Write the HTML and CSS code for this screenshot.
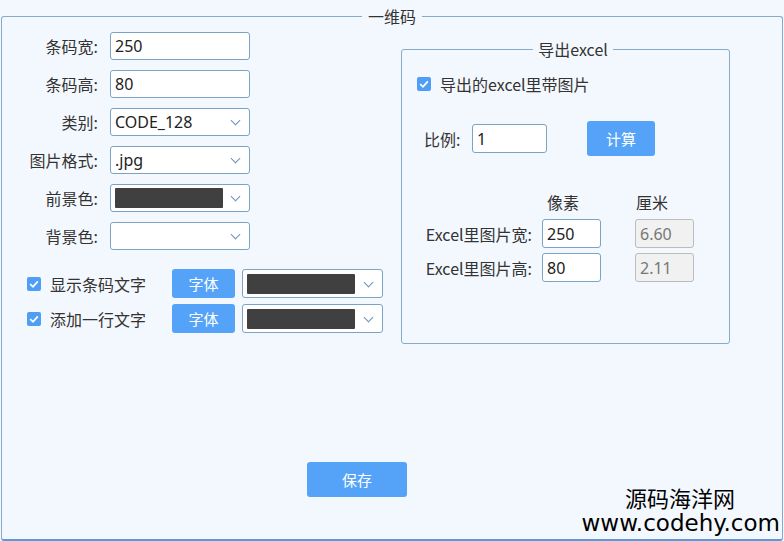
FILE: index.html
```html
<!DOCTYPE html>
<html lang="zh-CN">
<head>
    <meta charset="UTF-8">
    <title>一维码</title>
    <link rel="stylesheet" href="styles.css">
</head>
<body>
    <fieldset class="panel">
        <legend>一维码</legend>
        <div class="panel-body">
            <div class="left">
                <div class="form">
                    <label class="lbl">条码宽:</label>
                    <input class="field" value="250">
                    <label class="lbl">条码高:</label>
                    <input class="field" value="80">
                    <label class="lbl">类别:</label>
                    <div class="select"><span class="sel-text">CODE_128</span><i class="arrow"></i></div>
                    <label class="lbl">图片格式:</label>
                    <div class="select"><span class="sel-text">.jpg</span><i class="arrow"></i></div>
                    <label class="lbl">前景色:</label>
                    <div class="select"><span class="swatch"></span><i class="arrow"></i></div>
                    <label class="lbl">背景色:</label>
                    <div class="select"><span class="sel-text"></span><i class="arrow"></i></div>
                </div>
                <div class="opts">
                    <div class="opt-row">
                        <span class="check"><svg viewBox="0 0 14 14"><path d="M3.2 7.2 L6 9.8 L10.8 4.4" /></svg></span>
                        <span class="opt-text">显示条码文字</span>
                        <button class="btn font-btn">字体</button>
                        <div class="select wide"><span class="swatch"></span><i class="arrow"></i></div>
                    </div>
                    <div class="opt-row">
                        <span class="check"><svg viewBox="0 0 14 14"><path d="M3.2 7.2 L6 9.8 L10.8 4.4" /></svg></span>
                        <span class="opt-text">添加一行文字</span>
                        <button class="btn font-btn">字体</button>
                        <div class="select wide"><span class="swatch"></span><i class="arrow"></i></div>
                    </div>
                </div>
            </div>
            <fieldset class="excel">
                <legend>导出excel</legend>
                <div class="excel-check">
                    <span class="check"><svg viewBox="0 0 14 14"><path d="M3.2 7.2 L6 9.8 L10.8 4.4" /></svg></span>
                    <span>导出的excel里带图片</span>
                </div>
                <div class="ratio-row">
                    <span class="ratio-lbl">比例:</span>
                    <input class="field ratio" value="1">
                    <button class="btn calc">计算</button>
                </div>
                <div class="size-head">
                    <span class="h-px">像素</span>
                    <span class="h-cm">厘米</span>
                </div>
                <div class="size-row">
                    <span class="size-lbl">Excel里图片宽:</span>
                    <input class="field size-in" value="250">
                    <input class="field size-in size-cm" value="6.60" disabled>
                </div>
                <div class="size-row">
                    <span class="size-lbl">Excel里图片高:</span>
                    <input class="field size-in" value="80">
                    <input class="field size-in size-cm" value="2.11" disabled>
                </div>
            </fieldset>
        </div>
        <div class="footer">
            <button class="btn save">保存</button>
        </div>
    </fieldset>
    <div class="mark">
        <div class="mark-cn">源码海洋网</div>
        <div class="mark-url">www.codehy.com</div>
    </div>
</body>
</html>
```

FILE: styles.css
```css
html, body {
    margin: 0;
    width: 100%;
    height: 100%;
}
body {
    background: #f3f8fe;
    font-family: "Noto Sans CJK SC", "Noto Sans", sans-serif;
    font-size: 16px;
    color: #333;
    position: relative;
    overflow: hidden;
}
.panel {
    box-sizing: border-box;
    margin: 6px 0 0 1px;
    width: 782px;
    height: 535px;
    padding: 0;
    border: 1px solid #86aac8;
    border-bottom: 2px solid #5a9ad8;
    border-radius: 3px;
}
.panel > legend {
    margin: 0 auto;
    padding: 0 6px;
    line-height: 20px;
    font-size: 16px;
}
.panel-body {
    display: flex;
    padding: 6px 0 0 25px;
}
.left {
    width: 356px;
}
.form {
    display: grid;
    grid-template-columns: 71px 140px;
    grid-auto-rows: 28px;
    column-gap: 12px;
    row-gap: 10px;
    align-items: center;
}
.lbl {
    text-align: right;
    white-space: nowrap;
}
.field {
    box-sizing: border-box;
    height: 28px;
    width: 140px;
    margin: 0;
    padding: 0 4px;
    border: 1px solid #7aa3c6;
    border-radius: 3px;
    background: #fff;
    font-family: "Noto Sans", "Noto Sans CJK SC", sans-serif;
    font-size: 16px;
    color: #222;
    outline: none;
}
.select {
    box-sizing: border-box;
    height: 28px;
    width: 140px;
    border: 1px solid #7aa3c6;
    border-radius: 3px;
    background: #fff;
    display: flex;
    align-items: center;
    padding: 0 4px;
    position: relative;
}
.sel-text {
    font-family: "Noto Sans", "Noto Sans CJK SC", sans-serif;
    font-size: 16px;
    color: #222;
}
.swatch {
    display: block;
    width: 108px;
    height: 20px;
    background: #404040;
    border-radius: 1px;
}
.arrow {
    position: absolute;
    right: 10px;
    top: 8px;
    width: 6px;
    height: 6px;
    border-right: 1.5px solid #6e92b8;
    border-bottom: 1.5px solid #6e92b8;
    transform: rotate(45deg);
}
.opts {
    margin-top: 19px;
    display: flex;
    flex-direction: column;
    gap: 6px;
}
.opt-row {
    display: flex;
    align-items: center;
    height: 29px;
}
.check {
    display: inline-flex;
    width: 14px;
    height: 14px;
    background: #4f9ef5;
    border-radius: 2px;
    flex: none;
}
.check svg {
    width: 14px;
    height: 14px;
    fill: none;
    stroke: #fff;
    stroke-width: 1.8;
}
.opt-text {
    margin-left: 9px;
    width: 122px;
}
.btn {
    border: none;
    border-radius: 3px;
    background: #55a3f8;
    color: #fff;
    font-family: "Noto Sans CJK SC", sans-serif;
    font-size: 15px;
    padding: 0;
    cursor: pointer;
}
.font-btn {
    width: 63px;
    height: 29px;
}
.select.wide {
    width: 141px;
    height: 29px;
    margin-left: 7px;
}
.select.wide .arrow {
    top: 9px;
}
.excel {
    box-sizing: border-box;
    margin: 7px 0 0 18px;
    width: 329px;
    height: 305px;
    padding: 15px 0 0 15px;
    border: 1px solid #86aac8;
    border-radius: 3px;
}
.excel > legend {
    margin: 0 auto;
    padding: 0 5px;
    line-height: 20px;
    font-size: 16px;
}
.excel-check {
    display: flex;
    align-items: center;
    gap: 9px;
    height: 20px;
}
.ratio-row {
    display: flex;
    align-items: center;
    margin-top: 27px;
    height: 35px;
    padding-left: 7px;
}
.ratio-lbl {
    width: 48px;
}
.field.ratio {
    width: 75px;
    height: 29px;
}
.calc {
    margin-left: 40px;
    width: 68px;
    height: 35px;
}
.size-head {
    margin-top: 36px;
    height: 20px;
    line-height: 20px;
    display: flex;
}
.h-px {
    margin-left: 130px;
}
.h-cm {
    margin-left: 57px;
}
.size-row {
    display: flex;
    align-items: center;
    margin-top: 5px;
    height: 29px;
}
.size-head + .size-row {
    margin-top: 7px;
}
.size-lbl {
    width: 115px;
    text-align: right;
    margin-right: 10px;
    white-space: nowrap;
}
.field.size-in {
    width: 59px;
    height: 29px;
}
.field.size-cm {
    margin-left: 34px;
    background: #f1f1f1;
    border-color: #bcbcbc;
    color: #777;
}
.footer {
    margin-top: 118px;
    padding-left: 305px;
}
.save {
    width: 100px;
    height: 35px;
}
.mark {
    position: absolute;
    right: 4px;
    bottom: 6px;
    text-align: right;
    color: #000;
}
.mark-cn {
    font-family: "Noto Sans CJK SC", sans-serif;
    font-size: 22px;
    line-height: 22px;
    margin: 0 45px 3px 0;
}
.mark-url {
    font-family: "DejaVu Sans", sans-serif;
    font-size: 23px;
    line-height: 24px;
}
```
